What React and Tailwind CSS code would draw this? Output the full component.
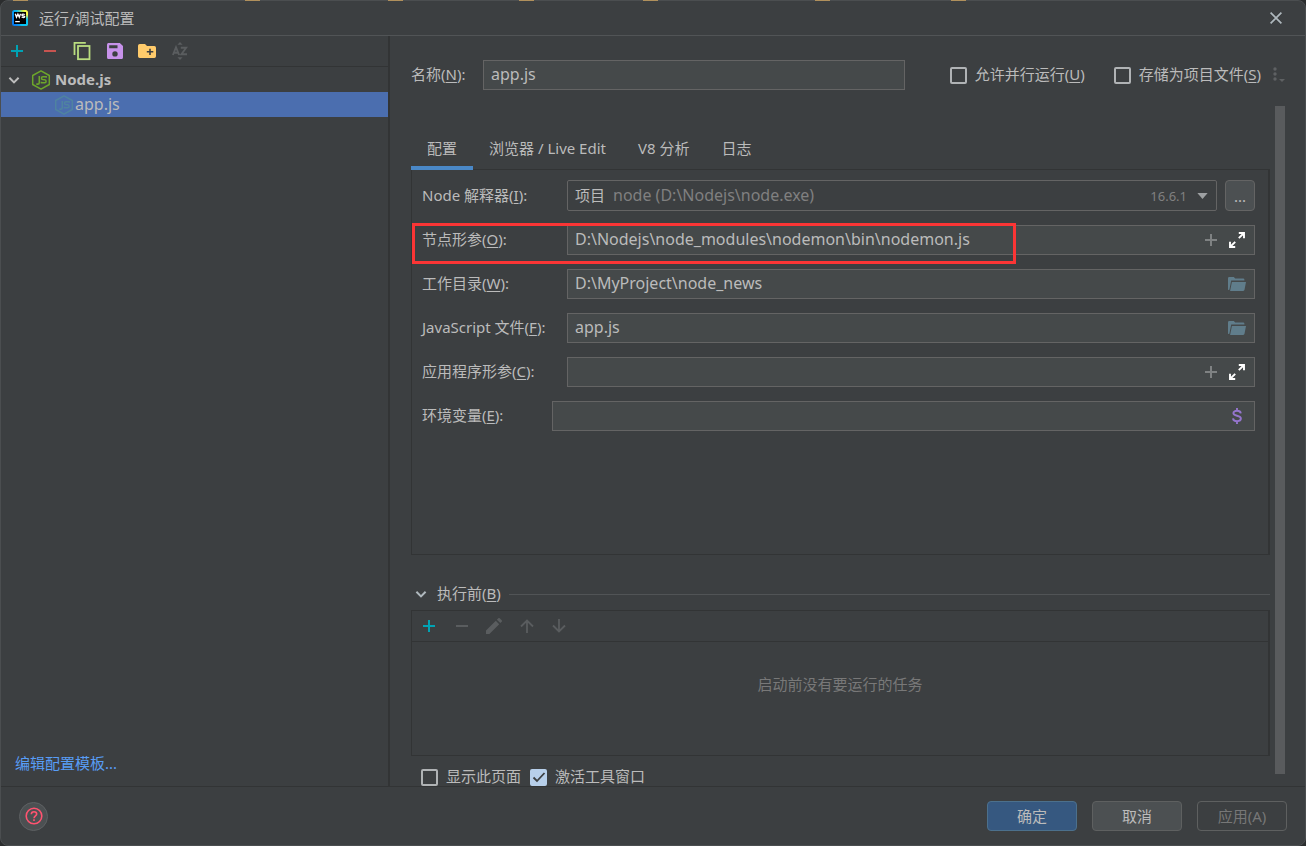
import { useState } from "react";

const IconButton = ({ label, children, className = "" }) => (
  <button type="button" aria-label={label} title={label} className={`flex size-5 items-center justify-center ${className}`}>
    {children}
  </button>
);

const Plus = ({ className = "" }) => (
  <svg viewBox="0 0 12 12" className={`size-3 ${className}`} fill="currentColor">
    <path d="M5 0h2v5h5v2H7v5H5V7H0V5h5z" />
  </svg>
);

const Minus = ({ className = "" }) => (
  <svg viewBox="0 0 12 12" className={`size-3 ${className}`} fill="currentColor">
    <path d="M0 5h12v2H0z" />
  </svg>
);

const Chevron = ({ className = "" }) => (
  <svg viewBox="0 0 12 12" className={`size-3 shrink-0 ${className}`} fill="none" stroke="currentColor" strokeWidth="2">
    <path d="M1.4 3.8 6 8.4l4.6-4.6" />
  </svg>
);

const NodeIcon = ({ className = "" }) => (
  <svg viewBox="0 0 20 20" className={`size-5 shrink-0 ${className}`} fill="none" stroke="currentColor">
    <path d="M10 .9 18.300 5.500v9L10 19.100 1.700 14.500v-9z" strokeWidth="1.500" strokeLinejoin="round" />
    <path d="M8.300 6v6.400c0 1.200-.6 1.700-1.500 1.700H5.300" strokeWidth="1.600" />
    <path d="M15.200 7.800V6.800h-3.400c-.9 0-1.300.5-1.300 1.400s.5 1.300 1.300 1.400l2 .2c.9.100 1.300.5 1.300 1.400s-.4 1.500-1.300 1.500h-3.400v-1" strokeWidth="1.500" />
  </svg>
);

const WebStormLogo = () => (
  <svg viewBox="0 0 16 16" className="size-4 shrink-0">
    <defs>
      <linearGradient id="ws" x1="0" y1="0.6" x2="1" y2="0.1">
        <stop offset="0" stopColor="#087cf0" />
        <stop offset="0.45" stopColor="#07b8f0" />
        <stop offset="0.75" stopColor="#c8ec4c" />
        <stop offset="0.9" stopColor="#fcf84a" />
      </linearGradient>
      <linearGradient id="wsLow" x1="0" y1="0" x2="0" y2="1">
        <stop offset="0.3" stopColor="#07c3f2" stopOpacity="0" />
        <stop offset="0.6" stopColor="#07c3f2" />
      </linearGradient>
    </defs>
    <rect width="16" height="16" rx="2.500" fill="url(#ws)" />
    <rect x="8" width="8" height="16" rx="2.500" fill="url(#wsLow)" />
    <rect x="2" y="2" width="12" height="12" fill="#000" />
    <path d="M3.300 3.800 4.500 7.300 5.900 4.200l1.400 3.100L8.500 3.800M12.800 4.700c-.5-.6-3-.9-3 .3s3 .4 3 1.600-2.400 1.100-3.200.3" fill="none" stroke="#fff" strokeWidth="1.300" />
    <path d="M3.200 11h4.600v1.300H3.200z" fill="#fff" />
  </svg>
);

const CopyIcon = () => (
  <svg viewBox="0 0 18 20" className="h-5 w-[18px] shrink-0" fill="none" stroke="#b9dd7f" strokeWidth="1.800">
    <path d="M1.500 14V1.900h11.300" />
    <rect x="5" y="5" width="11.500" height="13.200" />
  </svg>
);

const SaveIcon = () => (
  <svg viewBox="0 0 16 16" className="size-4" fill="#c792ea">
    <path fillRule="evenodd" d="M2 0h10.800L16 3v11.400a1.600 1.600 0 0 1-1.600 1.600H1.600A1.600 1.600 0 0 1 0 14.400V1.800A1.800 1.800 0 0 1 2 0zM2.200 2.200v3h8.300v-3zM8 8.200a2.700 2.700 0 1 0 0 5.400 2.700 2.700 0 0 0 0-5.400z" />
  </svg>
);

const NewFolderIcon = () => (
  <svg viewBox="0 0 18 14" className="h-[14px] w-[18px]">
    <path fill="#ffcb6b" d="M1.800 0H7l2 2h7.300A1.700 1.700 0 0 1 18 3.700v8.600a1.700 1.700 0 0 1-1.700 1.700H1.700A1.700 1.700 0 0 1 0 12.300V1.800A1.800 1.800 0 0 1 1.800 0z" />
    <path fill="#3c3f41" d="M11.200 4.700h1.600V7h2.500v1.600h-2.500V11h-1.600V8.600H8.800V7h2.400z" />
  </svg>
);

const SortIcon = () => (
  <svg viewBox="0 0 16 18" className="h-[18px] w-4" fill="none" stroke="#5a5d5f" strokeWidth="1.900">
    <path d="M8 0 10.600 2.700H5.400zM8 18l2.600-2.700H5.400z" fill="#5a5d5f" stroke="none" />
    <path d="M.9 13 4 5.200 7.100 13M2 10.700h4M8.800 5.700h5.400L9.400 12.300h5.600" />
  </svg>
);

const Expand = () => (
  <svg viewBox="0 0 16 16" className="size-4" fill="none" stroke="#fff" strokeWidth="1.900">
    <path d="M9.800 1H15v5.200M15 1 9.800 6.200M6.200 15H1V9.800M1 15l5.200-5.200" />
  </svg>
);

const FolderOpen = () => (
  <svg viewBox="0 0 18 14" className="h-[14px] w-[18px]" fill="#607d8b">
    <path d="M0 1.200A1.200 1.200 0 0 1 1.200 0h4.600l1.400 1.600h8A1.200 1.200 0 0 1 16.400 2.800V3.600H3.200L1.400 12.800 0 13z" />
    <path d="M3.900 4.900H18l-1.500 7.900A1.400 1.400 0 0 1 15.200 14H2.100z" />
  </svg>
);

const Dollar = () => (
  <svg viewBox="0 0 10 16" className="h-4 w-[10px]" fill="none" stroke="#9575cd" strokeWidth="1.900">
    <path d="M5 0v3M5 13v3M8.800 5.300C8.500 3.500 7.200 2.800 5 2.800c-2.300 0-3.600.9-3.600 2.400C1.400 8.600 8.900 6.900 8.900 10.600c0 1.600-1.500 2.600-3.800 2.600-2.400 0-3.900-1-4.100-2.900" />
  </svg>
);

const Key = ({ children }) => <span className="underline decoration-1 underline-offset-2">{children}</span>;

function Check({ id, defaultChecked = false, children }) {
  const [on, setOn] = useState(defaultChecked);
  return (
    <label htmlFor={id} className="flex h-[18px] items-center gap-2 whitespace-nowrap">
      <span className="grid size-[17px] place-items-center">
        <input
          id={id}
          type="checkbox"
          checked={on}
          onChange={(e) => setOn(e.target.checked)}
          className="col-start-1 row-start-1 size-[17px] appearance-none rounded-xs border-2 border-[#b0b3b5] checked:border-[#b7cfea] checked:bg-[#b7cfea]"
        />
        {on && (
          <svg viewBox="0 0 14 14" className="pointer-events-none col-start-1 row-start-1 size-[14px]" fill="none" stroke="#3c3f41" strokeWidth="1.800">
            <path d="M1.500 7.500 5 11l7.500-8" />
          </svg>
        )}
      </span>
      <span className="pb-0.5">{children}</span>
    </label>
  );
}

const field = "flex h-[30px] min-w-0 flex-1 items-center border border-[#646464] bg-[#45494a]";

function Row({ id, label, value = "", wide = false, children }) {
  return (
    <div className="flex items-center">
      <label htmlFor={id} className={`shrink-0 pb-0.5 whitespace-nowrap ${wide ? "w-[130px]" : "w-[145px]"}`}>
        {label}
      </label>
      <div className={field}>
        <input id={id} type="text" defaultValue={value} className="h-full min-w-0 flex-1 bg-transparent pb-0.5 pl-[7px] text-[16px] outline-none" />
        <div className="flex items-center gap-[6px] pr-[7px]">{children}</div>
      </div>
    </div>
  );
}

const ArgTools = () => (
  <>
    <IconButton label="插入宏" className="text-[#7f8283]"><Plus /></IconButton>
    <IconButton label="展开"><Expand /></IconButton>
  </>
);

const Browse = () => <IconButton label="浏览"><FolderOpen /></IconButton>;

const tabs = ["配置", "浏览器 / Live Edit", "V8 分析", "日志"];

// Slivers of the editor's folder icons that show above the dialog's top edge.
const slivers = [13, 245, 388, 519, 643, 815, 951];

export default function App() {
  const [tab, setTab] = useState(0);
  return (
    <div className="relative flex min-h-screen flex-col bg-[#2b2d2e] font-['Noto_Sans','Noto_Sans_CJK_SC',sans-serif] text-[15px] leading-5 text-[#bbbbbb]">
      <div className="flex flex-1 flex-col overflow-hidden rounded-lg border border-[#4b4e50] bg-[#3c3f41]">
        <header className="flex h-[35px] items-center border-b border-[#515456] pr-[23px] pl-[11px]">
          <WebStormLogo />
          <h1 className="ml-[11px] flex-1 text-[15px]">运行/调试配置</h1>
          <button type="button" aria-label="关闭" className="text-[#afb8bd]">
            <svg viewBox="0 0 12 12" className="size-3" fill="none" stroke="currentColor" strokeWidth="1.700">
              <path d="m.6.6 10.800 10.800M11.400.6.6 11.400" />
            </svg>
          </button>
        </header>

        <div className="flex flex-1">
          <aside className="flex w-[389px] shrink-0 flex-col border-r-2 border-[#323435]">
            <div className="flex h-[31px] flex-col justify-center border-b border-[#323435] pl-[6px]">
              <div className="flex w-[183px] items-center justify-between">
                <IconButton label="添加" className="text-[#00a3b4]"><Plus /></IconButton>
                <IconButton label="移除" className="text-[#c75450]"><Minus /></IconButton>
                <IconButton label="复制"><CopyIcon /></IconButton>
                <IconButton label="保存"><SaveIcon /></IconButton>
                <IconButton label="新建文件夹"><NewFolderIcon /></IconButton>
                <IconButton label="排序"><SortIcon /></IconButton>
              </div>
            </div>
            <div className="flex h-[25px] items-center pl-[7px] font-bold">
              <Chevron />
              <NodeIcon className="ml-[11px] text-[#6ca52b]" />
              <span className="ml-1 pb-0.5">Node.js</span>
            </div>
            <div className="flex h-[25px] items-center bg-[#4b6eaf] pl-[53px]">
              <NodeIcon className="text-[#4f83a0]" />
              <span className="ml-px pb-0.5 text-[16px]">app.js</span>
            </div>
            <a href="#templates" className="mt-auto mb-[13px] ml-[14px] self-start text-[#589df6]">编辑配置模板...</a>
          </aside>

          <main className="flex min-w-0 flex-1 flex-col pr-5 pl-[21px]">
            <div className="flex h-[70px] items-center pt-[8px]">
              <label htmlFor="name" className="w-[72px] shrink-0 pb-0.5">名称(<Key>N</Key>):</label>
              <input id="name" type="text" defaultValue="app.js" className="h-[30px] min-w-0 flex-1 border border-[#646464] bg-[#45494a] px-[7px] pb-0.5 text-[16px] outline-none" />
              <div className="ml-[45px] flex gap-[29px]">
                <Check id="parallel">允许并行运行(<Key>U</Key>)</Check>
                <Check id="store">存储为项目文件(<Key>S</Key>)</Check>
              </div>
              <button type="button" aria-label="更多选项" className="ml-3 text-[#5e6163]">
                <svg viewBox="0 0 12 16" className="h-4 w-3" fill="currentColor">
                  <circle cx="2" cy="2" r="1.700" /><circle cx="2" cy="7" r="1.700" /><circle cx="2" cy="12" r="1.700" />
                  <path d="M6 12h6l-3 3z" />
                </svg>
              </button>
            </div>

            <div className="flex flex-1 gap-[5px]">
              <div className="flex min-w-0 flex-1 flex-col">
                <div role="tablist" className="relative z-10 mt-5 flex h-11">
                  {tabs.map((t, i) => (
                    <button
                      key={t}
                      type="button"
                      role="tab"
                      aria-selected={tab === i}
                      onClick={() => setTab(i)}
                      className={`border-b-4 px-4 pt-[3px] ${tab === i ? "border-[#4a88c7]" : "border-transparent"}`}
                    >
                      {t}
                    </button>
                  ))}
                </div>

                <section className="relative -mt-px flex h-[386px] flex-col gap-[14px] border border-r-2 border-[#323435] pt-[10px] pr-[13px] pl-[10px]">
                  <div className="flex items-center">
                    <label htmlFor="interp" className="w-[145px] shrink-0 pb-0.5">Node 解释器(<Key>I</Key>):</label>
                    <button id="interp" type="button" className="flex h-[31px] flex-1 items-center rounded-xs border border-[#646464] px-[8px] pl-[7px] text-left">
                      <span className="pb-0.5">项目</span>
                      <span className="ml-2 flex-1 pb-0.5 text-[16px] text-[#808080]">node (D:\Nodejs\node.exe)</span>
                      <span className="text-[13px] text-[#808080]">16.6.1</span>
                      <svg viewBox="0 0 12 7" className="ml-[10px] h-[6px] w-[11px]" fill="#9da0a2"><path d="M0 0h12L6 7z" /></svg>
                    </button>
                    <button type="button" className="ml-2 h-[31px] w-[30px] rounded-sm border border-[#646464] bg-[#4c5052]">...</button>
                  </div>
                  <Row id="nodeargs" label={<>节点形参(<Key>O</Key>):</>} value="D:\Nodejs\node_modules\nodemon\bin\nodemon.js"><ArgTools /></Row>
                  <Row id="cwd" label={<>工作目录(<Key>W</Key>):</>} value="D:\MyProject\node_news"><Browse /></Row>
                  <Row id="file" label={<>JavaScript 文件(<Key>F</Key>):</>} value="app.js"><Browse /></Row>
                  <Row id="appargs" label={<>应用程序形参(<Key>C</Key>):</>}><ArgTools /></Row>
                  <Row id="env" wide label={<>环境变量(<Key>E</Key>):</>}><IconButton label="环境变量"><Dollar /></IconButton></Row>
                  <div className="pointer-events-none absolute top-[53px] left-0 h-[41px] w-[604px] border-3 border-[#fb3535]" />
                </section>

                <div className="mt-[29px] flex h-5 items-center">
                  <button type="button" className="flex items-center gap-[10px] pl-1">
                    <Chevron className="text-[#afb8bd]" />
                    <span className="pb-0.5">执行前(<Key>B</Key>)</span>
                  </button>
                  <div className="ml-2 h-px flex-1 bg-[#515456]" />
                </div>

                <section className="mt-[6px] flex h-[146px] flex-col border border-r-2 border-[#323435]">
                  <div className="flex h-[31px] flex-col justify-center border-b border-[#323435] pl-[7px] text-[#5a5d5f]">
                    <div className="flex w-[150px] items-center justify-between">
                      <IconButton label="添加任务" className="text-[#00a3b4]"><Plus /></IconButton>
                      <IconButton label="移除任务"><Minus /></IconButton>
                      <IconButton label="编辑任务">
                        <svg viewBox="0 0 16 16" className="size-4" fill="currentColor"><path d="M0 12.600 9.800 2.800l3.400 3.400L3.400 16H0zM10.900 1.700l1.400-1.400a1 1 0 0 1 1.400 0l2 2a1 1 0 0 1 0 1.400l-1.400 1.400z" /></svg>
                      </IconButton>
                      <IconButton label="上移">
                        <svg viewBox="0 0 14 14" className="size-[14px]" fill="none" stroke="currentColor" strokeWidth="1.800"><path d="M7 14V1.500M1 7.500l6-6 6 6" /></svg>
                      </IconButton>
                      <IconButton label="下移">
                        <svg viewBox="0 0 14 14" className="size-[14px]" fill="none" stroke="currentColor" strokeWidth="1.800"><path d="M7 0v12.500M1 6.500l6 6 6-6" /></svg>
                      </IconButton>
                    </div>
                  </div>
                  <p className="pt-8 text-center text-[#787878]">启动前没有要运行的任务</p>
                </section>

                <div className="mt-3 flex gap-[9px] pl-[10px]">
                  <Check id="show">显示此页面</Check>
                  <Check id="activate" defaultChecked>激活工具窗口</Check>
                </div>
              </div>
              <div className="mb-3 w-[10px] bg-[#595b5d]" />
            </div>
          </main>
        </div>

        <footer className="flex h-[59px] items-center gap-[15px] border-t border-[#323435] pr-[18px] pl-[18px]">
          <button type="button" aria-label="帮助" className="mr-auto flex size-[29px] items-center justify-center rounded-full border border-[#5e6163] bg-[#4c5052]">
            <svg viewBox="0 0 18 18" className="size-[18px]" fill="none" stroke="#ff5370" strokeWidth="1.600">
              <circle cx="9" cy="9" r="7.800" />
              <path d="M6.300 7.300C6.300 5.500 7.500 4.700 9 4.700s2.700 1 2.700 2.400C11.700 8.800 9 9 9 11.200M9 12.300v1.700" />
            </svg>
          </button>
          <button type="button" className="h-[30px] w-[90px] rounded-sm border border-[#4c708c] bg-[#365880]">确定</button>
          <button type="button" className="h-[30px] w-[90px] rounded-sm border border-[#5e6060] bg-[#4c5052]">取消</button>
          <button type="button" disabled className="h-[30px] w-[90px] rounded-sm border border-[#5e6060] text-[#777777]">应用(A)</button>
        </footer>
      </div>
      {slivers.map((x) => (
        <div key={x} className="absolute top-0 h-px w-[15px] bg-[#b0905c]" style={{ left: x }} />
      ))}
    </div>
  );
}
